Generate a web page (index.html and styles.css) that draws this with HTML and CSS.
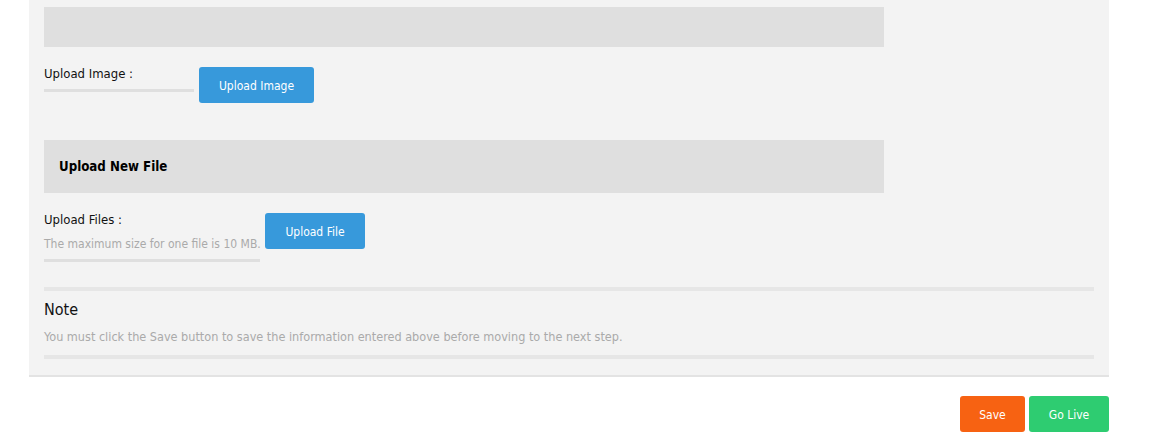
FILE: index.html
```html
<!DOCTYPE html>
<html>
<head>
<meta charset="utf-8">
<link rel="stylesheet" href="styles.css">
</head>
<body>
<div class="panel">
  <div class="section-head empty"></div>
  <div class="field-row first">
    <div class="field-label label-img">
      <div class="label">Upload Image :</div>
      <div class="rule"></div>
    </div>
    <button class="btn btn-blue btn-img">Upload Image</button>
  </div>

  <div class="section-head"><span>Upload New File</span></div>
  <div class="field-row second">
    <div class="field-label label-file">
      <div class="label">Upload Files :</div>
      <div class="hint">The maximum size for one file is 10 MB.</div>
      <div class="rule"></div>
    </div>
    <button class="btn btn-blue btn-file">Upload File</button>
  </div>

  <div class="note">
    <div class="note-title">Note</div>
    <div class="note-text">You must click the Save button to save the information entered above before moving to the next step.</div>
  </div>
</div>
<div class="actions">
  <button class="btn btn-save">Save</button>
  <button class="btn btn-live">Go Live</button>
</div>
</body>
</html>
```
FILE: styles.css
```css
html, body {
  margin: 0;
  padding: 0;
  background: #ffffff;
  font-family: "DejaVu Sans Condensed", "DejaVu Sans", sans-serif;
  font-size: 12px;
  color: #111;
}
.panel {
  margin-left: 29px;
  width: 1080px;
  box-sizing: border-box;
  background: #f3f3f3;
  padding: 7px 15px 16px;
  border-bottom: 2px solid #e3e3e3;
}
.section-head {
  width: 840px;
  height: 53px;
  background: #dfdfdf;
  display: flex;
  align-items: center;
  padding-left: 15px;
  box-sizing: border-box;
  font-weight: bold;
  font-size: 13.2px;
  color: #000;
}
.section-head.empty {
  height: 40px;
}
.field-row {
  display: flex;
  align-items: flex-start;
}
.field-row.first {
  margin-top: 20px;
  margin-bottom: 37px;
}
.field-row.second {
  margin-top: 20px;
  margin-bottom: 25px;
}
.field-label {
  display: flex;
  flex-direction: column;
  margin-right: 5px;
  flex: none;
  white-space: nowrap;
}
.label-img {
  width: 150px;
}
.label-file {
  width: 216px;
}
.label {
  font-size: 13px;
  line-height: 14px;
  color: #111;
}
.hint {
  color: #aaaaaa;
  margin-top: 10px;
  line-height: 14px;
}
.rule {
  height: 3px;
  margin-top: 8px;
  background: #dfdfdf;
}
.btn {
  border: none;
  border-radius: 3px;
  color: #fff;
  font-family: inherit;
  font-size: 12px;
  height: 36px;
  padding: 2px 0 0;
  cursor: pointer;
}
.btn-blue {
  background: #3799db;
}
.btn-img {
  width: 115px;
}
.btn-file {
  width: 100px;
}
.note {
  border-top: 4px solid #e6e6e6;
  border-bottom: 4px solid #e6e6e6;
  padding: 9px 0 11px;
}
.note-title {
  font-size: 16px;
  line-height: 20px;
  color: #111;
}
.note-text {
  font-size: 12.55px;
  color: #aaaaaa;
  margin-top: 10px;
  line-height: 14px;
}
.actions {
  display: flex;
  justify-content: flex-end;
  gap: 4px;
  width: 1109px;
  margin-top: 19px;
}
.btn-save {
  background: #f76212;
  width: 65px;
}
.btn-live {
  background: #2ecc71;
  width: 80px;
}
```
